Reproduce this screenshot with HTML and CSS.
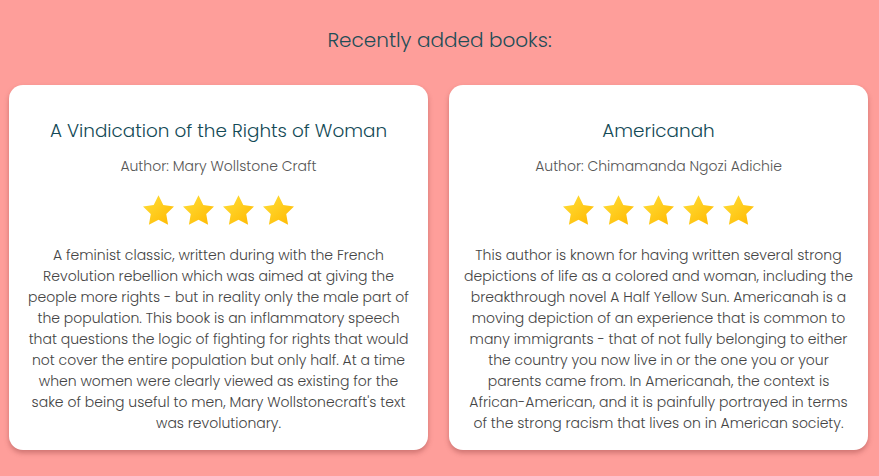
FILE: index.html
```html
<!DOCTYPE html>
<html lang="en">
<head>
<meta charset="utf-8">
<title>Recently added books</title>
<link rel="stylesheet" href="styles.css">
</head>
<body>
<svg width="0" height="0" class="defs" aria-hidden="true">
  <defs>
    <linearGradient id="starGrad" x1="0" y1="0" x2="1" y2="1">
      <stop offset="0" stop-color="#ffdf3a"/>
      <stop offset="1" stop-color="#ffb800"/>
    </linearGradient>
    <symbol id="star" viewBox="2 2 20 19.1">
      <path d="M12 2l3.09 6.26L22 9.27l-5 4.87 1.18 6.88L12 17.77l-6.18 3.25L7 14.14 2 9.27l6.91-1.01L12 2z" fill="url(#starGrad)"/>
    </symbol>
  </defs>
</svg>
<h1 class="heading">Recently added books:</h1>
<main class="cards">
  <article class="card">
    <h2 class="title">A Vindication of the Rights of Woman</h2>
    <p class="author">Author: Mary Wollstone Craft</p>
    <div class="stars">
      <svg class="star"><use href="#star"/></svg>
      <svg class="star"><use href="#star"/></svg>
      <svg class="star"><use href="#star"/></svg>
      <svg class="star"><use href="#star"/></svg>
    </div>
    <p class="desc">A feminist classic, written during with the French Revolution rebellion which was aimed at giving the people more rights - but in reality only the male part of the population. This book is an inflammatory speech that questions the logic of fighting for rights that would not cover the entire population but only half. At a time when women were clearly viewed as existing for the sake of being useful to men, Mary Wollstonecraft's text was revolutionary.</p>
  </article>
  <article class="card">
    <h2 class="title">Americanah</h2>
    <p class="author">Author: Chimamanda Ngozi Adichie</p>
    <div class="stars">
      <svg class="star"><use href="#star"/></svg>
      <svg class="star"><use href="#star"/></svg>
      <svg class="star"><use href="#star"/></svg>
      <svg class="star"><use href="#star"/></svg>
      <svg class="star"><use href="#star"/></svg>
    </div>
    <p class="desc">This author is known for having written several strong depictions of life as a colored and woman, including the breakthrough novel A Half Yellow Sun. Americanah is a moving depiction of an experience that is common to many immigrants - that of not fully belonging to either the country you now live in or the one you or your parents came from. In Americanah, the context is African-American, and it is painfully portrayed in terms of the strong racism that lives on in American society.</p>
  </article>
</main>
</body>
</html>
```

FILE: styles.css
```css
* { box-sizing: border-box; }
html, body { height: 100%; }
body {
  margin: 0;
  background: #fe9e9a;
  font-family: "Poppins", "Open Sans", "Liberation Sans", sans-serif;
  color: #555;
  overflow: hidden;
}
.defs { position: absolute; width: 0; height: 0; }
.heading {
  margin: 28px 0 33px;
  font-size: 20px;
  line-height: 24px;
  font-weight: 300;
  color: #1f4d57;
  text-align: center;
}
.cards {
  display: flex;
  gap: 21px;
  padding: 0 11px 0 9px;
}
.card {
  flex: 1;
  background: #fff;
  border-radius: 14px;
  padding: 31px 15px 16px;
  box-shadow: 0 3px 5px rgba(120, 40, 40, 0.35);
  text-align: center;
}
.title {
  margin: 0;
  font-size: 18.4px;
  line-height: 30px;
  font-weight: 300;
  color: #134a56;
}
.author {
  margin: 10px 0 0;
  font-size: 14px;
  line-height: 21px;
  font-weight: 300;
  color: #555;
}
.stars {
  display: flex;
  justify-content: center;
  gap: 9px;
  margin-top: 18px;
}
.star { width: 31px; height: 30px; display: block; }
.desc {
  margin: 20px 0 0;
  font-size: 14px;
  line-height: 21px;
  font-weight: 300;
  color: #444;
}
```
